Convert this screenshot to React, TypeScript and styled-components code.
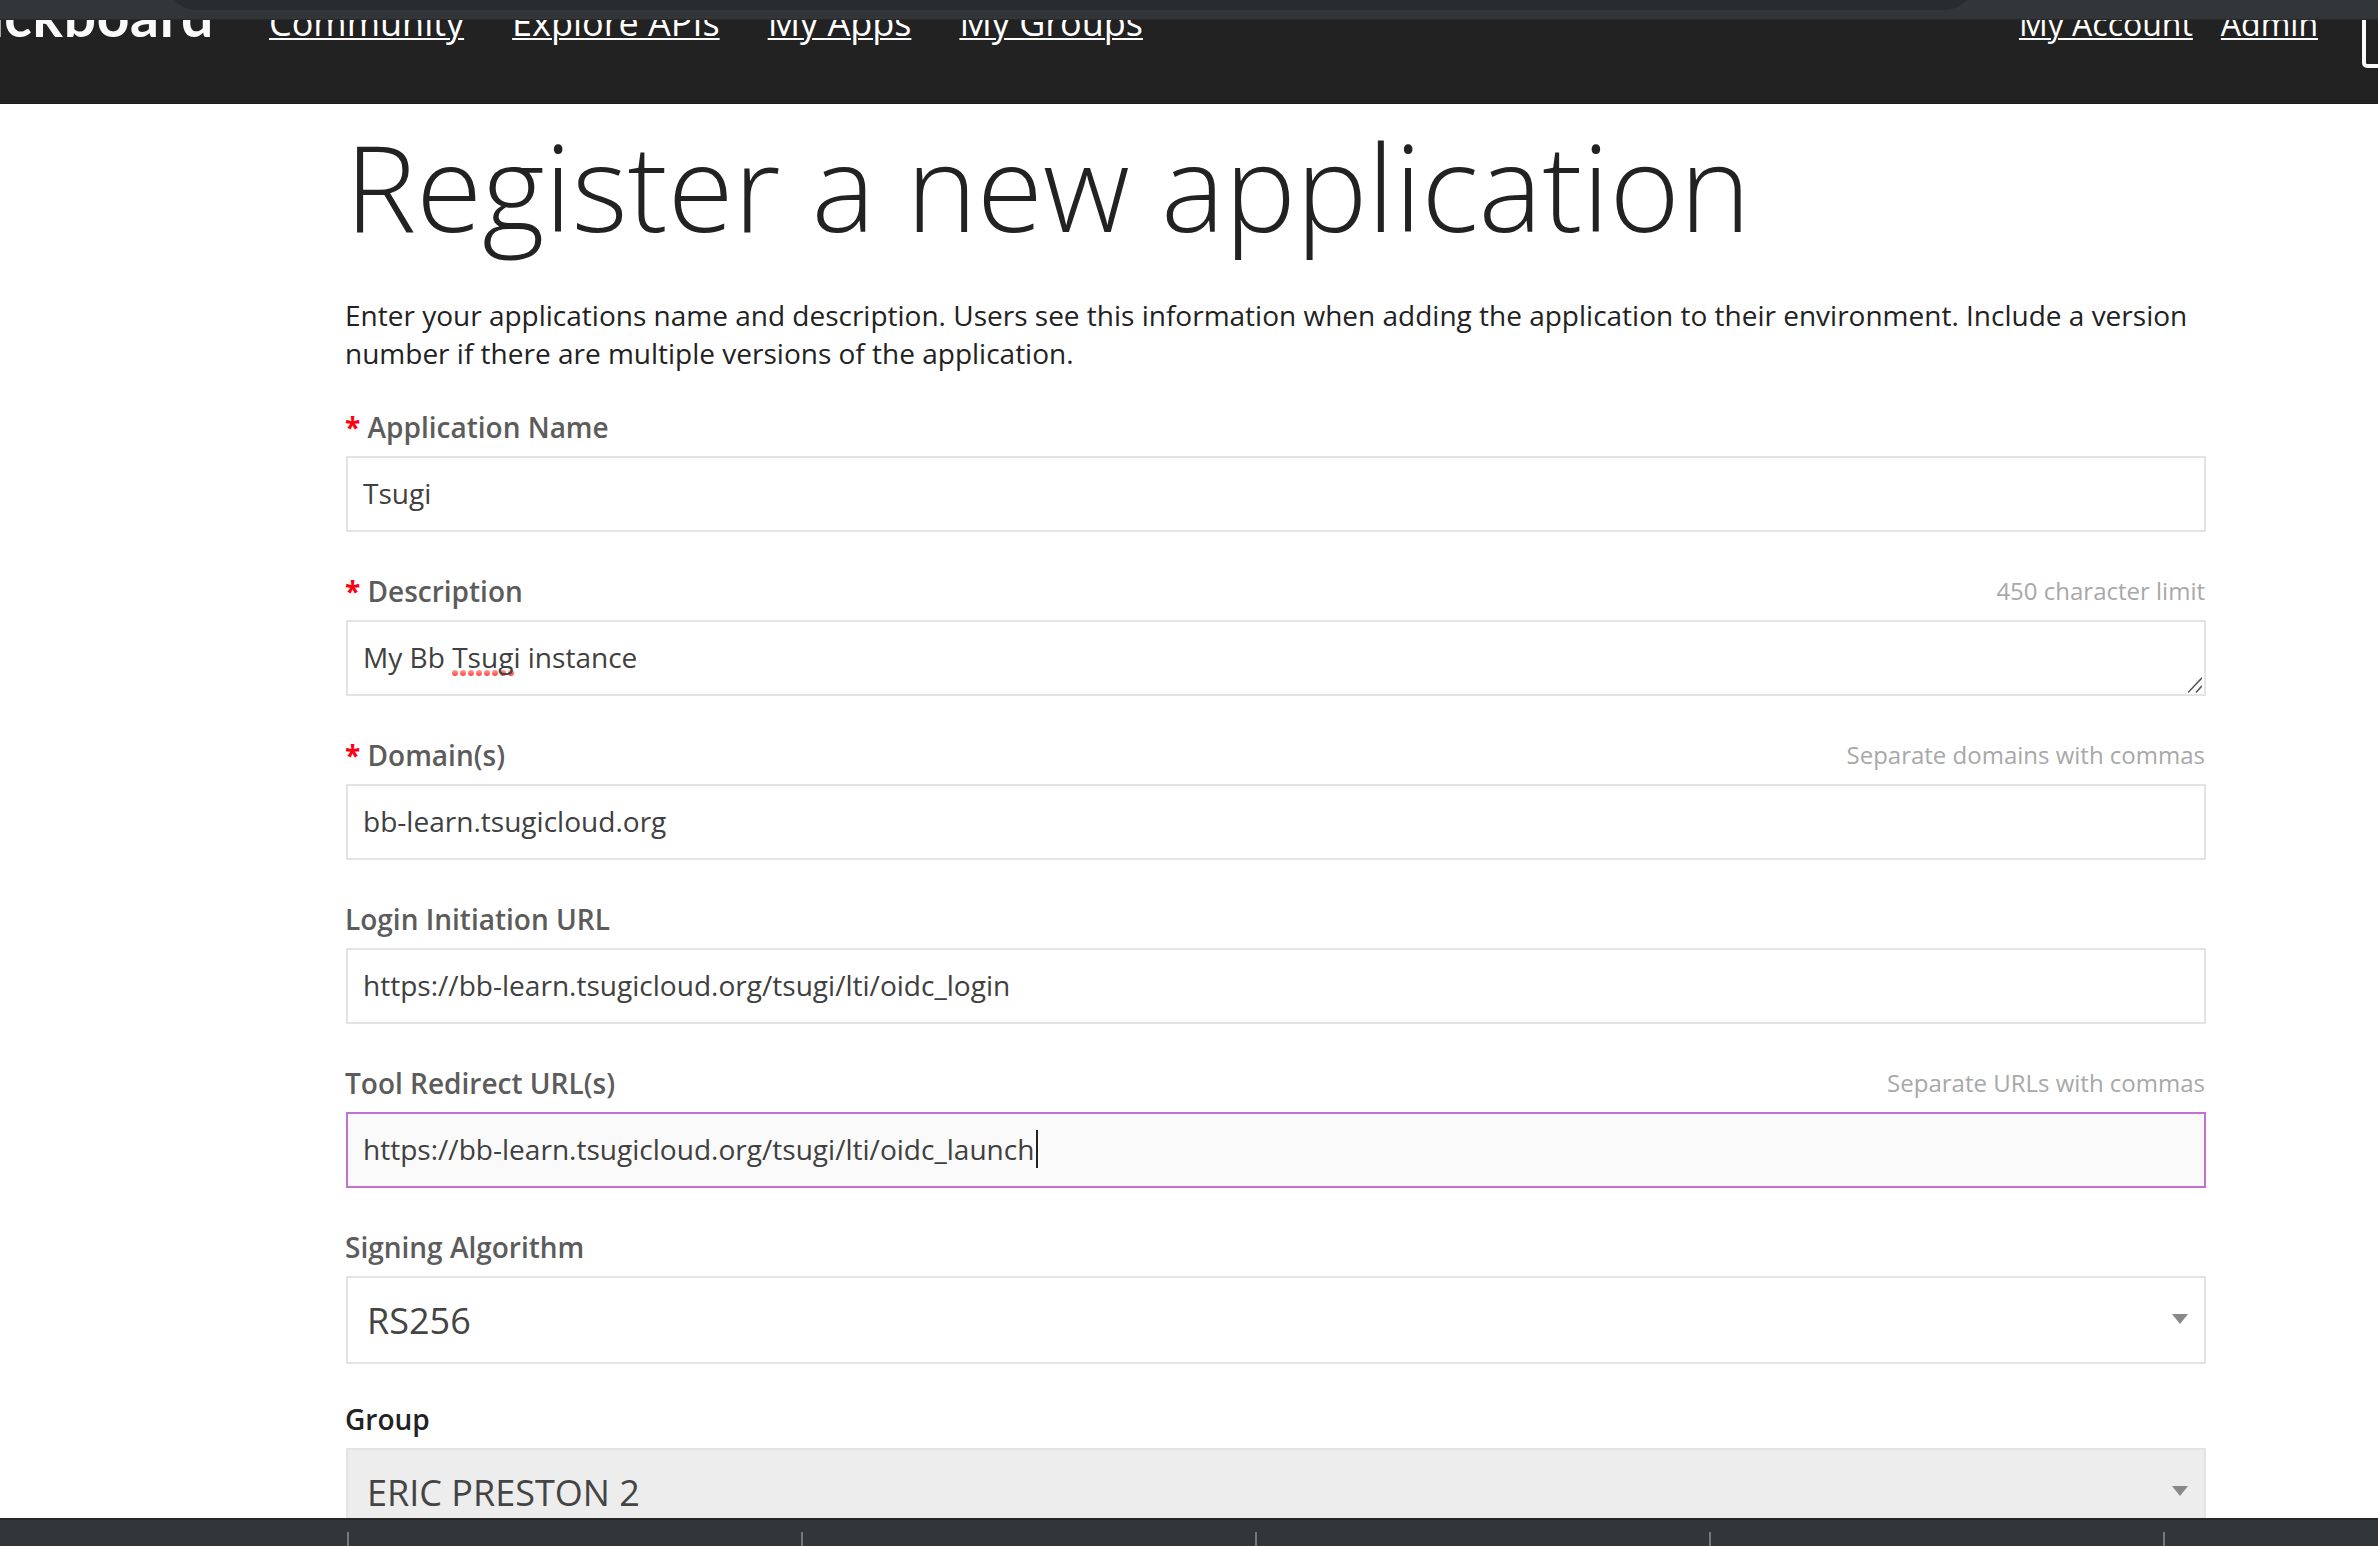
import React from 'react';
import styled, { createGlobalStyle } from 'styled-components';

const GlobalStyle = createGlobalStyle`
  *, *::before, *::after { box-sizing: border-box; }
  html, body { margin: 0; padding: 0; background: #fff; }
  body { overflow: hidden; font-family: 'Open Sans', 'Noto Sans', sans-serif; color: #222; }
`;

const Screen = styled.div`
  position: relative;
  display: flex;
  flex-direction: column;
  width: 2378px;
  height: 1546px;
  overflow: hidden;
  background: #fff;
`;

const BrowserBar = styled.div`
  position: absolute;
  top: 0;
  left: 0;
  right: 0;
  height: 20px;
  padding: 0 405px 0 168px;
  overflow: hidden;
  background: #323639;
  border-bottom: 1px solid #282828;
`;

const AddressField = styled.div`
  height: 56px;
  margin-top: -46px;
  border-radius: 28px;
  background: #282c2f;
`;

const Header = styled.header`
  flex: none;
  display: flex;
  align-items: flex-start;
  height: 104px;
  overflow: hidden;
  background: #222;
  border-bottom: 1px solid #1d1c1d;
`;

const Brand = styled.div`
  flex: none;
  display: flex;
  justify-content: flex-end;
  width: 214px;
  margin-right: 55px;
  margin-top: -20px;
  font: 700 57px/70px Lato, 'Open Sans', sans-serif;
  letter-spacing: 0.7px;
  color: #fafafa;
  white-space: nowrap;
`;

const Nav = styled.nav<{ $size: number; $gap: number; $line: number }>`
  flex: none;
  display: flex;
  gap: ${(p) => p.$gap}px;
  font-size: ${(p) => p.$size}px;
  line-height: ${(p) => p.$line}px;
`;

const NavLink = styled.a`
  color: #fff;
  white-space: nowrap;
  text-decoration: underline;
  text-decoration-thickness: 2px;
  text-underline-offset: 2px;
`;

const AccountArea = styled.div`
  display: flex;
  align-items: flex-start;
  margin-left: auto;
`;

const SignOutButton = styled.button`
  flex: none;
  width: 200px;
  height: 88px;
  margin: -20px -184px 0 44px;
  border: 4px solid #fafafa;
  border-radius: 5px;
  background: transparent;
`;

const Content = styled.main`
  flex: 1;
  min-height: 0;
  display: flex;
  flex-direction: column;
  width: 1860px;
  margin-left: 345px;
`;

const Title = styled.h1`
  flex: none;
  margin: 0 0 28px;
  font-size: 120px;
  line-height: 164px;
  font-weight: 300;
  white-space: nowrap;
`;

const Intro = styled.p`
  flex: none;
  margin: 0 0 36px;
  font-size: 28.01px;
  line-height: 38px;
`;

const Form = styled.form`
  display: flex;
  flex-direction: column;
`;

const Field = styled.div<{ $after?: number }>`
  flex: none;
  display: flex;
  flex-direction: column;
  gap: 10px;
  margin-bottom: ${(p) => p.$after ?? 40}px;
`;

const LabelRow = styled.div`
  display: flex;
  justify-content: space-between;
  height: 38px;
  line-height: 38px;
`;

const Label = styled.label<{ $strong?: boolean }>`
  font-size: 28px;
  font-weight: 600;
  color: ${(p) => (p.$strong ? '#222' : '#5c5c5c')};
`;

const Required = styled.span`
  font-weight: 700;
  color: #ff0010;
`;

const Hint = styled.span`
  font-size: 24px;
  color: #a8a8a8;
`;

const Control = styled.div<{ $focused?: boolean }>`
  position: relative;
  display: flex;
  align-items: center;
  height: 76px;
  margin: 0 -1px 0 1px;
  padding: 0 15px 2px;
  border: 2px solid ${(p) => (p.$focused ? '#c270d4' : '#e4e4e4')};
  background: ${(p) => (p.$focused ? '#fafafa' : '#fff')};
  font-size: 28.05px;
  line-height: 38px;
  color: #404040;
  white-space: pre;
`;

const SelectBox = styled.div<{ $disabled?: boolean }>`
  display: flex;
  align-items: center;
  justify-content: space-between;
  height: 88px;
  margin: 0 -1px 0 1px;
  padding: 2px 16px 0 19px;
  border: 2px solid #e4e4e4;
  background: ${(p) => (p.$disabled ? '#ededed' : '#fff')};
  font-size: 36px;
  line-height: 50px;
  color: #444;
`;

const Arrow = styled.span`
  margin-bottom: 4px;
  border: solid transparent;
  border-width: 10px 8px 0;
  border-top-color: #888;
`;

const Caret = styled.span`
  width: 2px;
  height: 38px;
  margin-left: 2px;
  background: #222;
`;

const Misspelled = styled.span`
  position: relative;
  z-index: 0;
`;

const Dots = styled.svg`
  position: absolute;
  z-index: -1;
  left: 0;
  top: 32px;
`;

const Grip = styled.svg`
  position: absolute;
  right: 2px;
  bottom: 1px;
`;

const Shelf = styled.footer`
  flex: none;
  display: flex;
  gap: 452px;
  height: 28px;
  padding: 12px 0 0 347px;
  border-top: 2px solid #272727;
  background: #323639;
  position: relative;
`;

const ShelfDivider = styled.span`
  flex: none;
  width: 2px;
  background: #75787a;
`;

const SpellingDots = () => (
  <Dots width="62" height="6" viewBox="0 0 62 6">
    <defs>
      <linearGradient id="dot" x1="0" y1="0" x2="0" y2="1">
        <stop offset="0" stopColor="#ff9c9a" />
        <stop offset="1" stopColor="#ff413c" />
      </linearGradient>
    </defs>
    {Array.from({ length: 8 }, (_, i) => (
      <circle key={i} cx={3 + i * 8} cy="3" r="3" fill="url(#dot)" />
    ))}
  </Dots>
);

const ResizeGrip = () => (
  <Grip width="14" height="16" viewBox="0 0 14 16" stroke="#555" strokeWidth="1.5" fill="none">
    <path d="M0 15.5 14 0.8M8 15.5 14 8.8" />
  </Grip>
);

interface FieldProps {
  label: string;
  required?: boolean;
  strong?: boolean;
  hint?: string;
  after?: number;
  children: React.ReactNode;
}

const FormField = ({ label, required, strong, hint, after, children }: FieldProps) => (
  <Field $after={after}>
    <LabelRow>
      <Label $strong={strong}>
        {required && <Required>* </Required>}
        {label}
      </Label>
      {hint && <Hint>{hint}</Hint>}
    </LabelRow>
    {children}
  </Field>
);

export default function App() {
  return (
    <Screen>
      <GlobalStyle />
      <Header>
        <Brand>Blackboard</Brand>
        <Nav $size={36} $gap={48} $line={46}>
          {['Community', 'Explore APIs', 'My Apps', 'My Groups'].map((item) => (
            <NavLink key={item}>{item}</NavLink>
          ))}
        </Nav>
        <AccountArea>
          <Nav $size={32} $gap={28} $line={47}>
            <NavLink>My Account</NavLink>
            <NavLink>Admin</NavLink>
          </Nav>
          <SignOutButton />
        </AccountArea>
      </Header>
      <Content>
        <Title>Register a new application</Title>
        <Intro>
          Enter your applications name and description. Users see this information when adding the
          application to their environment. Include a version number if there are multiple versions
          of the application.
        </Intro>
        <Form>
          <FormField label="Application Name" required>
            <Control>Tsugi</Control>
          </FormField>
          <FormField label="Description" required hint="450 character limit">
            <Control>
              <span>My Bb </span>
              <Misspelled>
                Tsugi
                <SpellingDots />
              </Misspelled>
              <span> instance</span>
              <ResizeGrip />
            </Control>
          </FormField>
          <FormField label="Domain(s)" required hint="Separate domains with commas">
            <Control>bb-learn.tsugicloud.org</Control>
          </FormField>
          <FormField label="Login Initiation URL">
            <Control>https://bb-learn.tsugicloud.org/tsugi/lti/oidc_login</Control>
          </FormField>
          <FormField label="Tool Redirect URL(s)" hint="Separate URLs with commas">
            <Control $focused>
              https://bb-learn.tsugicloud.org/tsugi/lti/oidc_launch
              <Caret />
            </Control>
          </FormField>
          <FormField label="Signing Algorithm" after={36}>
            <SelectBox>
              RS256
              <Arrow />
            </SelectBox>
          </FormField>
          <FormField label="Group" strong after={0}>
            <SelectBox $disabled>
              ERIC PRESTON 2
              <Arrow />
            </SelectBox>
          </FormField>
        </Form>
      </Content>
      <Shelf>
        {Array.from({ length: 5 }, (_, i) => (
          <ShelfDivider key={i} />
        ))}
      </Shelf>
      <BrowserBar>
        <AddressField />
      </BrowserBar>
    </Screen>
  );
}
